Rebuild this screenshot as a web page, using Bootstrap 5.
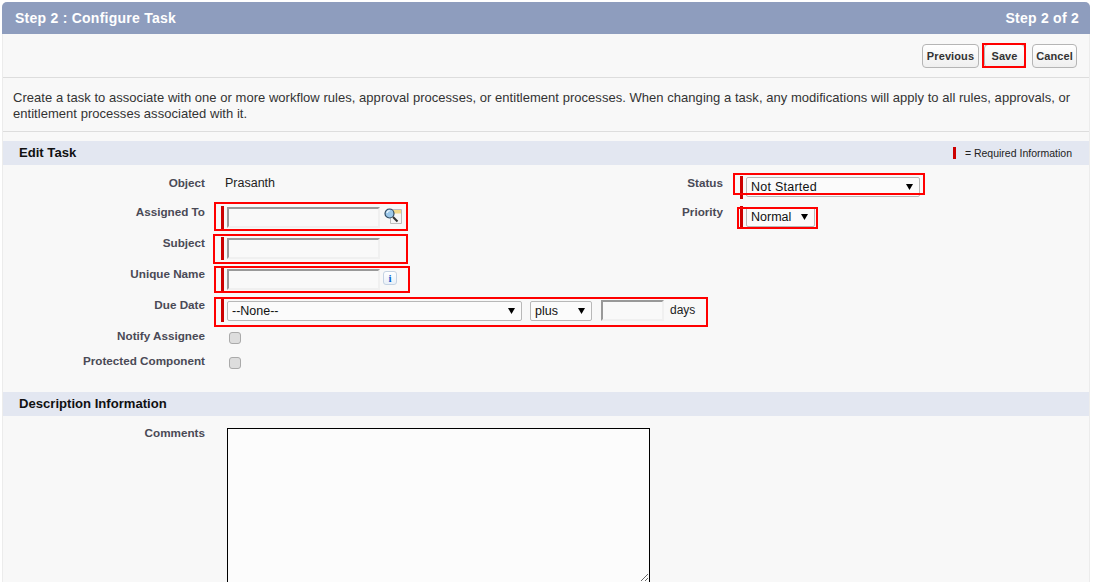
<!DOCTYPE html>
<html lang="en">
<head>
    <meta charset="UTF-8">
    <meta name="viewport" content="width=device-width, initial-scale=1.0">
    <title>Step 2 : Configure Task</title>
    <link rel="stylesheet" href="https://cdn.jsdelivr.net/npm/bootstrap@5.3.0/dist/css/bootstrap.min.css">
    <style>
        body {
            background: #fff;
            font-family: "Liberation Sans", Arial, sans-serif;
            font-size: 13px;
            color: #222;
            overflow: hidden;
        }
        .page-wrap { position: relative; height: 582px; padding: 2px 4px 0 2px; overflow: hidden; }
        .wiz-panel {
            height: 580px;
            background: #f8f8f8;
            border: 0;
            border-left: 1px solid #ececec;
            border-right: 1px solid #ececec;
            border-radius: 5px 5px 0 0;
            font-size: 13px;
            color: #222;
        }
        .wiz-head {
            height: 32px;
            padding: 0 11px 0 13px;
            margin: 0 -1px;
            background: #8e9dbe;
            border: 0;
            border-radius: 5px 5px 0 0 !important;
            color: #fff;
            font-weight: 700;
            font-size: 14px;
            letter-spacing: .25px;
            line-height: 32px;
        }
        .btn-bar { height: 44px; padding: 10px 12px 0 0; border-bottom: 1px solid #ddd; }
        .sf-btn {
            height: 24px;
            padding: 0;
            border: 1px solid #b5b5b5;
            border-radius: 4px;
            background: linear-gradient(#fff, #efefef);
            color: #333;
            font-size: 11px;
            font-weight: 700;
            line-height: 22px;
            letter-spacing: .1px;
        }
        #btnPrev { width: 57px; }
        #btnSave { width: 41px; margin-left: 5px; }
        #btnCancel { width: 45px; margin-left: 7px; }
        .intro-text {
            height: 54px;
            margin: 0;
            padding: 12px 10px 0;
            border-bottom: 1px solid #ddd;
            line-height: 16px;
            letter-spacing: .036px;
            color: #333;
        }
        .sec-title {
            height: 24px;
            padding: 0 17px 0 16px;
            background: #e3e7f1;
            color: #111;
            font-size: 13.1px;
            font-weight: 700;
            line-height: 24px;
        }
        .sec-first { margin-top: 9px; }
        .req-note { font-size: 10.5px; font-weight: 400; color: #222; }
        .req-note i { display: block; width: 3px; height: 12px; margin-right: 9px; background: #c00; }
        .form-area { padding-top: 11px; padding-bottom: 13px; }
        .frm-row { display: flex; align-items: flex-start; }
        .comment-row { padding-top: 10px; }
        .h29 { height: 29px; }
        .h31 { height: 31px; }
        .h25 { height: 25px; }
        .frm-lbl {
            flex: 0 0 202px;
            text-align: right;
            color: #4a4a56;
            font-size: 11.7px;
            font-weight: 700;
            line-height: 14px;
        }
        .frm-val { flex: 0 0 459px; margin-left: 16px; }
        .frm-wide { flex: 1 1 auto; }
        .frm-lbl-r { flex: 0 0 43px; text-align: right; color: #4a4a56; font-size: 11.7px; font-weight: 700; line-height: 14px; }
        .frm-val-r { margin-left: 17px; }
        .plain-val { display: block; margin-left: 4px; font-size: 12.5px; line-height: 14px; color: #222; }
        .req-wrap { display: flex; align-items: flex-start; padding-top: 1px; }
        .req-top { padding-top: 0; }
        .req-bar { flex: 0 0 3px; height: 23px; margin-right: 3px; background: #c00; }
        .sf-input.form-control {
            width: 153px;
            height: 21px;
            min-height: 0;
            margin-top: 1px;
            padding: 0 3px;
            background: #f9f9f9;
            border-width: 2px;
            border-style: solid;
            border-color: #999 #f0f0f0 #f0f0f0 #999;
            border-radius: 0;
            font-size: 12px;
        }
        .sf-input.days-input { width: 63px; margin-top: 1px; }
        .sf-select.form-select {
            height: 20px;
            margin-top: 1px;
            padding: 0 18px 0 4px;
            border: 1px solid #b8b8b8;
            border-radius: 2px;
            background-color: #fbfbfb;
            background-image: url("data:image/svg+xml,%3csvg xmlns='http://www.w3.org/2000/svg' viewBox='0 0 7 6'%3e%3cpath fill='%23000' d='M0 0h7L3.500 6z'/%3e%3c/svg%3e");
            background-position: right 6px center;
            background-size: 7px 6px;
            color: #111;
            font-size: 12.5px;
            line-height: 18px;
        }
        #selStatus { width: 174px; letter-spacing: .25px; }
        #selPriority { width: 69px; }
        #selDue { width: 295px; margin-top: 2px; }
        #selPlus { width: 62px; margin-left: 8px; margin-top: 2px; }
        .days-wrap { margin-left: 9px; }
        .days-txt { margin-left: 6px; margin-top: 1px; font-size: 12px; line-height: 20px; }
        .icon-gap { margin: 2px 0 0 4px; }
        .sf-check.form-check-input {
            width: 12px;
            height: 12px;
            margin: 3px 0 0 8px;
            background-color: #ddd;
            border: 1px solid #aaa;
            border-radius: 3px;
        }
        .info-btn {
            display: block;
            width: 14px;
            height: 14px;
            margin: 3px 0 0 3px;
            border: 1px solid #c5d3e3;
            border-radius: 3px;
            background: linear-gradient(#fff, #e9f0f8);
            color: #0a62d0;
            font: 700 11px/12px "Liberation Serif", serif;
            text-align: center;
        }
        .comment-box {
            display: block;
            width: 423px;
            height: 155px;
            margin: 2px 0 0 6px;
            background: #fcfcfc;
            border: 1px solid #000;
            font-size: 12px;
            resize: both;
        }
        .anno { position: absolute; border: 2px solid #f00; pointer-events: none; }
        #annoSave { left: 982px; top: 43px; width: 44px; height: 25px; }
        #annoStatus { left: 733px; top: 173px; width: 192px; height: 22px; }
        #annoPriority { left: 737px; top: 207px; width: 81px; height: 22px; }
        #annoAssigned { left: 214px; top: 202px; width: 194px; height: 29px; }
        #annoSubject { left: 213px; top: 234px; width: 195px; height: 30px; }
        #annoUnique { left: 214px; top: 266px; width: 196px; height: 27px; }
        #annoDue { left: 214px; top: 297px; width: 494px; height: 30px; }
    </style>
</head>
<body>
    <div class="page-wrap">
        <div class="card wiz-panel">
            <div class="card-header wiz-head d-flex justify-content-between flex-shrink-0">
                <span>Step 2 : Configure Task</span>
                <span>Step 2 of 2</span>
            </div>

            <div class="btn-bar d-flex justify-content-end align-items-start flex-shrink-0">
                <button type="button" class="btn sf-btn" id="btnPrev">Previous</button>
                <button type="button" class="btn sf-btn" id="btnSave">Save</button>
                <button type="button" class="btn sf-btn" id="btnCancel">Cancel</button>
            </div>

            <p class="intro-text flex-shrink-0">Create a task to associate with one or more workflow rules, approval processes, or entitlement processes. When changing a task, any modifications will apply to all rules, approvals, or entitlement processes associated with it.</p>

            <div class="sec-title sec-first d-flex justify-content-between align-items-center flex-shrink-0">
                <span>Edit Task</span>
                <span class="req-note d-flex align-items-center"><i></i>= Required Information</span>
            </div>

            <div class="form-area flex-shrink-0">
                <div class="frm-row h29">
                    <div class="frm-lbl">Object</div>
                    <div class="frm-val"><span class="plain-val">Prasanth</span></div>
                    <div class="frm-lbl-r">Status</div>
                    <div class="frm-val-r req-wrap req-top">
                        <span class="req-bar"></span>
                        <select class="form-select sf-select" id="selStatus"><option>Not Started</option></select>
                    </div>
                </div>
                <div class="frm-row h31">
                    <div class="frm-lbl">Assigned To</div>
                    <div class="frm-val req-wrap">
                        <span class="req-bar"></span>
                        <input type="text" class="form-control sf-input">
                        <svg class="icon-gap" width="18" height="17" viewBox="0 0 18 17">
                            <path d="M6.500 1.500h11v14h-11z" fill="#f6f6f6" stroke="#bdbdbd"/>
                            <path d="M9 2h8v3.500H9z" fill="#f3d98a"/>
                            <circle cx="5.500" cy="5.500" r="4.500" fill="#9cc8ea" stroke="#2f4a62" stroke-width="1.200"/>
                            <path d="M3 5a2.800 2.800 0 0 1 2.800-2.300" fill="none" stroke="#eaf5fd" stroke-width="1.200"/>
                            <path d="M9 9l4.500 4.500" stroke="#333" stroke-width="2"/>
                        </svg>
                    </div>
                    <div class="frm-lbl-r">Priority</div>
                    <div class="frm-val-r req-wrap">
                        <span class="req-bar"></span>
                        <select class="form-select sf-select" id="selPriority"><option>Normal</option></select>
                    </div>
                </div>
                <div class="frm-row h31">
                    <div class="frm-lbl">Subject</div>
                    <div class="frm-val req-wrap">
                        <span class="req-bar"></span>
                        <input type="text" class="form-control sf-input">
                    </div>
                </div>
                <div class="frm-row h31">
                    <div class="frm-lbl">Unique Name</div>
                    <div class="frm-val req-wrap">
                        <span class="req-bar"></span>
                        <input type="text" class="form-control sf-input">
                        <span class="info-btn">i</span>
                    </div>
                </div>
                <div class="frm-row h31">
                    <div class="frm-lbl">Due Date</div>
                    <div class="frm-val frm-wide req-wrap">
                        <span class="req-bar"></span>
                        <select class="form-select sf-select" id="selDue"><option>--None--</option></select>
                        <select class="form-select sf-select" id="selPlus"><option>plus</option></select>
                        <div class="days-wrap d-flex align-items-start">
                            <input type="text" class="form-control sf-input days-input">
                            <span class="days-txt">days</span>
                        </div>
                    </div>
                </div>
                <div class="frm-row h25">
                    <div class="frm-lbl">Notify Assignee</div>
                    <div class="frm-val"><input type="checkbox" class="form-check-input sf-check"></div>
                </div>
                <div class="frm-row h25">
                    <div class="frm-lbl">Protected Component</div>
                    <div class="frm-val"><input type="checkbox" class="form-check-input sf-check"></div>
                </div>
            </div>

            <div class="sec-title flex-shrink-0">Description Information</div>

            <div class="frm-row comment-row flex-shrink-0">
                <div class="frm-lbl">Comments</div>
                <div class="frm-val"><textarea class="comment-box"></textarea></div>
            </div>
        </div>

        <!-- red review marks drawn over the form -->
        <div class="anno" id="annoSave"></div>
        <div class="anno" id="annoStatus"></div>
        <div class="anno" id="annoPriority"></div>
        <div class="anno" id="annoAssigned"></div>
        <div class="anno" id="annoSubject"></div>
        <div class="anno" id="annoUnique"></div>
        <div class="anno" id="annoDue"></div>
    </div>

    <script src="https://cdn.jsdelivr.net/npm/bootstrap@5.3.0/dist/js/bootstrap.bundle.min.js"></script>
</body>
</html>
